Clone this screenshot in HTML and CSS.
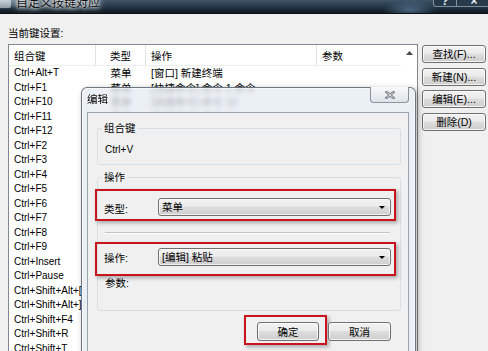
FILE: index.html
```html
<!DOCTYPE html>
<html lang="zh-CN">
<head>
<meta charset="utf-8">
<title>自定义按键对应</title>
<link rel="stylesheet" href="styles.css">
</head>
<body>
<div class="window">
  <div class="titlebar">
    <span class="app-icon"></span>
    <span class="title">自定义按键对应</span>
    <span class="cap-btn cap-help"><span class="cap-glyph">?</span></span>
    <span class="cap-btn cap-close"><span class="cap-glyph">×</span></span>
  </div>
  <div class="content">
    <div class="caption">当前键设置:</div>
    <div class="main-row">
      <div class="listview">
        <div class="list-body">
          <div class="lv-row lv-head">
            <div class="c1">组合键</div><div class="c2">类型</div><div class="c3">操作</div><div class="c4">参数</div>
          </div>
          <div class="lv-row"><div class="c1">Ctrl+Alt+T</div><div class="c2">菜单</div><div class="c3">[窗口] 新建终端</div><div class="c4"></div></div>
          <div class="lv-row"><div class="c1">Ctrl+F1</div><div class="c2">菜单</div><div class="c3">[快捷命令] 命令 1 命令</div><div class="c4"></div></div>
          <div class="lv-row"><div class="c1">Ctrl+F10</div><div class="c2">菜单</div><div class="c3">[快捷命令] 命令 10</div><div class="c4"></div></div>
          <div class="lv-row"><div class="c1">Ctrl+F11</div><div class="c2">菜单</div><div class="c3">[快捷命令] 命令 11</div><div class="c4"></div></div>
          <div class="lv-row"><div class="c1">Ctrl+F12</div><div class="c2">菜单</div><div class="c3">[快捷命令] 命令 12</div><div class="c4"></div></div>
          <div class="lv-row"><div class="c1">Ctrl+F2</div><div class="c2">菜单</div><div class="c3">[快捷命令] 命令 2</div><div class="c4"></div></div>
          <div class="lv-row"><div class="c1">Ctrl+F3</div><div class="c2">菜单</div><div class="c3">[快捷命令] 命令 3</div><div class="c4"></div></div>
          <div class="lv-row"><div class="c1">Ctrl+F4</div><div class="c2">菜单</div><div class="c3">[快捷命令] 命令 4</div><div class="c4"></div></div>
          <div class="lv-row"><div class="c1">Ctrl+F5</div><div class="c2">菜单</div><div class="c3">[快捷命令] 命令 5</div><div class="c4"></div></div>
          <div class="lv-row"><div class="c1">Ctrl+F6</div><div class="c2">菜单</div><div class="c3">[快捷命令] 命令 6</div><div class="c4"></div></div>
          <div class="lv-row"><div class="c1">Ctrl+F7</div><div class="c2">菜单</div><div class="c3">[快捷命令] 命令 7</div><div class="c4"></div></div>
          <div class="lv-row"><div class="c1">Ctrl+F8</div><div class="c2">菜单</div><div class="c3">[快捷命令] 命令 8</div><div class="c4"></div></div>
          <div class="lv-row"><div class="c1">Ctrl+F9</div><div class="c2">菜单</div><div class="c3">[快捷命令] 命令 9</div><div class="c4"></div></div>
          <div class="lv-row"><div class="c1">Ctrl+Insert</div><div class="c2">菜单</div><div class="c3">[编辑] 复制</div><div class="c4"></div></div>
          <div class="lv-row"><div class="c1">Ctrl+Pause</div><div class="c2">菜单</div><div class="c3">[终端] 中断</div><div class="c4"></div></div>
          <div class="lv-row"><div class="c1">Ctrl+Shift+Alt+[</div><div class="c2">菜单</div><div class="c3">[窗口] 上一个</div><div class="c4"></div></div>
          <div class="lv-row"><div class="c1">Ctrl+Shift+Alt+]</div><div class="c2">菜单</div><div class="c3">[窗口] 下一个</div><div class="c4"></div></div>
          <div class="lv-row"><div class="c1">Ctrl+Shift+F4</div><div class="c2">菜单</div><div class="c3">[文件] 关闭全部</div><div class="c4"></div></div>
          <div class="lv-row"><div class="c1">Ctrl+Shift+R</div><div class="c2">菜单</div><div class="c3">[文件] 重新连接</div><div class="c4"></div></div>
          <div class="lv-row"><div class="c1">Ctrl+Shift+T</div><div class="c2">菜单</div><div class="c3">[窗口] 新建选项卡</div><div class="c4"></div></div>
        </div>
        <div class="vscroll">
          <svg class="up-arrow" width="7" height="4" viewBox="0 0 7 4"><polygon points="0,4 3.5,0 7,4" fill="#4a4a4a"/></svg>
        </div>
      </div>
      <div class="side-buttons">
        <button class="btn">查找(F)...</button>
        <button class="btn">新建(N)...</button>
        <button class="btn">编辑(E)...</button>
        <button class="btn">删除(D)</button>
      </div>
    </div>
  </div>
</div>

<div class="dialog">
  <div class="dlg-title">
    <span class="dlg-title-text">编辑</span>
    <span class="dlg-close">
      <svg width="10" height="8" viewBox="0 0 10 8">
        <path d="M1.5 1 L8.5 7 M8.5 1 L1.5 7" stroke="#7a7f85" stroke-width="2.6" stroke-linecap="square" fill="none"/>
        <path d="M1.5 1 L8.5 7 M8.5 1 L1.5 7" stroke="#e9ecef" stroke-width="0.9" fill="none"/>
      </svg>
    </span>
  </div>
  <div class="dlg-client">
    <fieldset class="group group-key">
      <legend>组合键</legend>
      <div class="gb-value">Ctrl+V</div>
    </fieldset>
    <fieldset class="group group-op">
      <legend>操作</legend>
      <div class="hl hl-type">
        <div class="field-row">
          <span class="field-label">类型:</span>
          <div class="combo"><span class="combo-text">菜单</span><svg class="combo-arrow" width="6" height="3" viewBox="0 0 6 3"><polygon points="0,0 6,0 3,3" fill="#000"/></svg></div>
        </div>
      </div>
      <div class="sep"></div>
      <div class="hl hl-op">
        <div class="field-row">
          <span class="field-label label-op">操作:</span>
          <div class="combo"><span class="combo-text">[编辑] 粘贴</span><svg class="combo-arrow" width="6" height="3" viewBox="0 0 6 3"><polygon points="0,0 6,0 3,3" fill="#000"/></svg></div>
        </div>
      </div>
      <div class="param-label">参数:</div>
    </fieldset>
    <div class="dlg-buttons">
      <div class="hl hl-ok"><button class="btn dlg-btn">确定</button></div>
      <button class="btn dlg-btn btn-cancel">取消</button>
    </div>
  </div>
</div>
</body>
</html>
```

FILE: styles.css
```css
* { box-sizing: border-box; }

html, body {
  margin: 0;
  padding: 0;
  width: 488px;
  height: 351px;
  overflow: hidden;
  background: #f0f0f0;
  font-family: "Liberation Sans", "Noto Sans CJK SC", sans-serif;
  font-size: 10.5px;
  color: #000;
}

.window {
  width: 488px;
  height: 351px;
  overflow: hidden;
}

/* ---------- main title bar ---------- */
.titlebar {
  height: 14px;
  display: flex;
  align-items: flex-start;
  overflow: hidden;
  background:
    radial-gradient(ellipse 40px 14px at 410px 10px, rgba(110,150,185,0.55), rgba(0,0,0,0) 70%),
    radial-gradient(ellipse 40px 12px at 0px 0px, rgba(170,185,200,0.8), rgba(0,0,0,0) 80%),
    linear-gradient(180deg, #3f5668 0%, #223443 55%, #0e1820 100%);
  border-bottom: 1px solid #0b1117;
}

.app-icon {
  width: 11px;
  height: 8px;
  background: linear-gradient(180deg, #c9d2da, #8e9ba6);
  border-radius: 0 0 2px 0;
}

.title {
  margin-left: 5px;
  margin-top: -4px;
  font-size: 12px;
  line-height: 14px;
  color: #111;
  text-shadow: 0 0 3px #fff, 0 0 5px #fff, 0 0 8px rgba(255,255,255,0.9);
  white-space: nowrap;
}

.cap-btn {
  height: 8px;
  margin-top: -1px;
  border: 1px solid rgba(180,195,210,0.65);
  border-top: none;
  background: linear-gradient(180deg, rgba(20,35,48,0.6), rgba(40,60,78,0.6));
  display: flex;
  justify-content: center;
  align-items: flex-end;
  overflow: hidden;
}

.cap-help {
  margin-left: auto;
  width: 24px;
  border-radius: 0 0 0 3px;
}

.cap-close {
  width: 35px;
  margin-right: -4px;
  border-left: none;
}

.cap-glyph {
  color: #e8eef4;
  font-weight: bold;
  font-size: 12px;
  line-height: 12px;
  margin-bottom: -1px;
}

/* ---------- content ---------- */
.content {
  padding: 0 2px 0 8px;
}

.caption {
  margin-top: 12px;
  line-height: 14px;
  height: 14px;
}

.main-row {
  margin-top: 4px;
  display: flex;
  gap: 4px;
}

.listview {
  width: 410px;
  height: 320px;
  border: 1px solid #828790;
  background: #fff;
  display: flex;
}

.list-body {
  flex: 1;
  min-width: 0;
}

.lv-row {
  display: grid;
  grid-template-columns: 87px 50px 171px 1fr;
  height: 14.5px;
  line-height: 14.5px;
  white-space: nowrap;
}

.lv-row > div {
  overflow: hidden;
}

.lv-row .c1 {
  padding-left: 5px;
  font-size: 10px;
}

.lv-row .c2 {
  text-align: center;
}

.lv-row .c3,
.lv-row .c4 {
  padding-left: 5px;
}

.lv-head {
  height: 21px;
  line-height: 18px;
  border-bottom: 1px solid #eeeeee;
}

.lv-head > div {
  padding-top: 2px;
  border-right: 1px solid #e2e2e2;
}

.lv-head .c1 {
  font-size: 10.5px;
}

.lv-head .c4 {
  border-right: none;
}

.vscroll {
  width: 16px;
  display: flex;
  justify-content: center;
  align-items: flex-start;
  padding-top: 6px;
  background: #fff;
}

.side-buttons {
  margin-top: 1px;
  width: 64px;
  display: flex;
  flex-direction: column;
  gap: 4.5px;
}

.btn {
  height: 18px;
  padding: 0;
  font-family: "Liberation Sans", "Noto Sans CJK SC", sans-serif;
  font-size: 10.5px;
  line-height: 14px;
  color: #000;
  border: 1px solid #707070;
  border-radius: 3px;
  background: linear-gradient(180deg, #f2f2f2 0%, #ebebeb 45%, #dddddd 50%, #cfcfcf 100%);
  box-shadow: inset 0 0 0 1px rgba(255,255,255,0.75);
  text-align: center;
}

/* ---------- dialog (floating window) ---------- */
.dialog {
  position: absolute;
  left: 81px;
  top: 87px;
  width: 335px;
  height: 275px;
  border: 1px solid rgba(55,65,78,0.7);
  border-radius: 6px 6px 0 0;
  background: rgba(228,235,242,0.74);
  -webkit-backdrop-filter: blur(2.5px);
  backdrop-filter: blur(2.5px);
  box-shadow: 2px 2px 6px rgba(0,0,0,0.32), inset 0 0 0 1px rgba(255,255,255,0.55);
  padding: 0 6px 0 5px;
  display: flex;
  flex-direction: column;
}

.dlg-title {
  height: 24px;
  display: flex;
  align-items: flex-start;
}

.dlg-title-text {
  padding-top: 4px;
  line-height: 14px;
  font-size: 10.5px;
  text-shadow: 0 0 4px rgba(255,255,255,0.9);
}

.dlg-close {
  margin-left: auto;
  margin-top: -1px;
  width: 39px;
  height: 16px;
  border: 1px solid rgba(85,95,108,0.65);
  border-top: none;
  border-radius: 0 0 4px 4px;
  background: linear-gradient(180deg, #f7f8f9 0%, #eceff2 50%, #dfe4e8 100%);
  display: flex;
  justify-content: center;
  align-items: center;
}

.dlg-client {
  flex: 1;
  border: 1px solid #98a3ad;
  background: #f0f0f0;
  display: flex;
  flex-direction: column;
}

.group {
  margin: 0 7px 0 9px;
  padding: 0;
  border: 1px solid #d5dfe5;
  border-radius: 3px;
  min-width: 0;
}

.group legend {
  margin-left: 4px;
  padding: 0 2px;
  line-height: 14px;
  font-size: 10.5px;
}

.group-key {
  margin-top: 8px;
  padding-bottom: 7px;
}

.gb-value {
  padding: 8px 0 0 7px;
  line-height: 14px;
  font-size: 10px;
}

.group-op {
  margin-top: 5px;
  padding-bottom: 20px;
}

.hl {
  border: 2px solid #c8151d;
  box-shadow: 2px 2px 4px rgba(0,0,0,0.3);
}

.hl-type {
  margin: 5px 4px 0 -3px;
  padding: 7px 3px 3px 7px;
}

.hl-op {
  margin: 8px 4px 0 -3px;
  padding: 4px 3px 8px 7px;
}

.field-row {
  display: flex;
  align-items: flex-start;
  height: 18px;
}

.field-label {
  width: 54px;
  line-height: 14px;
  margin-top: 4px;
}

.label-op {
  margin-top: 3px;
}

.combo {
  flex: 1;
  height: 18px;
  border: 1px solid #707070;
  border-radius: 3px;
  background: linear-gradient(180deg, #f2f2f2 0%, #ebebeb 45%, #dddddd 50%, #cfcfcf 100%);
  box-shadow: inset 0 0 0 1px rgba(255,255,255,0.7);
  display: flex;
  align-items: center;
  padding: 0 5px 0 3px;
}

.combo-text {
  flex: 1;
  line-height: 14px;
}

.sep {
  margin: 11px 10px 0 7px;
  height: 2px;
  border-top: 1px solid #c4c4c4;
  border-bottom: 1px solid #ffffff;
}

.param-label {
  padding-left: 7px;
  line-height: 14px;
}

.dlg-buttons {
  margin: 4px 17px 0 0;
  display: flex;
  justify-content: flex-end;
  align-items: flex-start;
}

.hl-ok {
  padding: 5px 6px 2px 11px;
}

.dlg-btn {
  height: 19px;
  width: 62px;
  display: block;
}

.btn-cancel {
  width: 63px;
  margin-left: 1px;
  margin-top: 7px;
}
```
